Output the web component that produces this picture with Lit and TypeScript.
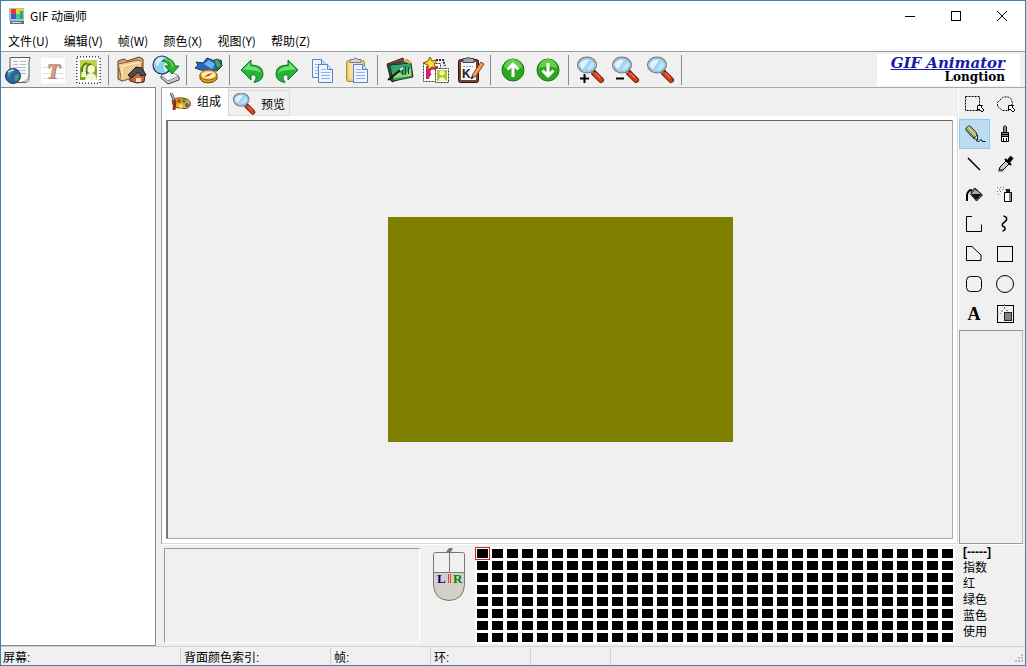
import { LitElement, html, svg, css } from "lit";
import { customElement, state } from "lit/decorators.js";
import { classMap } from "lit/directives/class-map.js";

const lens = svg`
  <path d="M20 21 L27 28" stroke="#6b1a0c" stroke-width="6" stroke-linecap="round"/>
  <path d="M21 22 L27 28" stroke="#d8401c" stroke-width="4" stroke-linecap="round"/>
  <path d="M21 21 L26 26" stroke="#f09070" stroke-width="1"/>
  <path d="M16 18 l3 3" stroke="#888" stroke-width="3"/>
  <ellipse cx="13" cy="13" rx="9" ry="7.500" fill="#9ed6f5" stroke="#67737c" stroke-width="2"/>
  <ellipse cx="13" cy="13" rx="8.500" ry="7" fill="none" stroke="#c7d3da" stroke-width="1"/>
  <path d="M6 12 q3 -5 9 -4 l-6 9 q-3 -1 -3 -5z" fill="#e2f5ff"/>
  <path d="M13 18 l5 -8 q3 2 1 5 q-2 3 -6 3z" fill="#c4e9fc"/>`;

const sheet = (x: number, y: number) => svg`
  <g transform="translate(${x} ${y})">
    <path d="M.5 .5 h9 l5 5 v13 h-14z" fill="#eef4ff" stroke="#5b82c4"/>
    <path d="M9.5 .5 v5 h5" fill="#c9dbf8" stroke="#5b82c4"/>
    <path d="M3 5.5 h5 M3 8.500 h9 M3 11.500 h9 M3 14.500 h9" stroke="#8fb0e2"/>
  </g>`;

const globe = (x: number, y: number, r: number, sea: string, land: string) => svg`
  <g transform="translate(${x} ${y}) scale(${r / 8})">
    <circle r="8" fill="${sea}" stroke="#16325c"/>
    <path d="M-6 -3 q2 -4 6 -4 q1 3 -2 4 q0 3 -3 4z" fill="${land}"/>
    <path d="M2 -1 q4 -2 5 1 q-1 4 -4 6 q-2 -2 -1 -7z" fill="${land}"/>
    <path d="M-5 -4 q3 -3 6 -2" stroke="#d9f1ff" fill="none" stroke-width="1.500"/>
  </g>`;

const undo = svg`
  <path d="M6 18 L16 8 V13 Q28 13 28 22 Q28 29 19 30.500 Q22 26 21 24 Q19 22 16 23 V28z"
    fill="#27b43c" stroke="#0d7a20" stroke-linejoin="round"/>
  <path d="M8 17.500 L15 10.500 V14.500 Q24 14 26 21 Q22 18 15 18z" fill="#73e06c"/>`;

const disc = svg`
  <circle cx="17" cy="18" r="11" fill="#2ba81d" stroke="#16780d"/>
  <path d="M8 16 a9 9 0 0 1 18 0 q-9 -3 -18 0z" fill="#64cf4c"/>`;

const art: Record<string, unknown> = {
  project: svg`
    <path d="M9 5.500 h20 q-1 2 -1 5 v16 q0 4 -5 4 h-10 q-4 0 -4 -4z" fill="#f7f8fa" stroke="#555b63"/>
    <path d="M12 9.500 h5 M12 12.500 h5 M19 9.500 h6 M19 12.500 h6 M12 15.500 h13 M16 18.500 h9 M19 21.500 h6" stroke="#b9bec6"/>
    <path d="M21 30 q6 -1 7 -7" stroke="#999" fill="none"/>
    ${globe(12, 24, 7.5, "#2c63a8", "#3f9f70")}`,
  text: svg`
    <rect x="5" y="6" width="24" height="25" fill="#fff"/>
    <path d="M6 15.500 h22 M6 21.500 h22 M6 26.500 h22" stroke="#e8e0da"/>
    <text x="18" y="27" text-anchor="middle" fill="#9c8078" font-size="22" font-weight="700" font-style="italic" font-family="Liberation Serif, serif">T</text>
    <text x="17" y="26" text-anchor="middle" fill="#d99a80" font-size="22" font-weight="700" font-style="italic" font-family="Liberation Serif, serif">T</text>`,
  stamp: svg`
    <rect x="6" y="5" width="23" height="26" fill="#fff" stroke="#444" stroke-width="2" stroke-dasharray="1 2"/>
    <rect x="6.500" y="5.500" width="22" height="25" fill="#fff"/>
    <rect x="9" y="8" width="17" height="20" fill="#7ea81c"/>
    <path d="M9 8 h17 v8 q-5 -5 -9 -5 t-8 5z" fill="#b9d44b"/>
    <circle cx="20" cy="17" r="4" fill="#f6f9df"/><circle cx="14" cy="16" r="3" fill="#e1edaa"/>
    <path d="M14 28 q1 -7 6 -7 q5 0 6 7z M10 25 q0 -6 4 -7 q2 3 1 7z" fill="#f3f7d5"/>
    <path d="M11 20 q0 -8 5 -9 M16 22 q-2 -9 4 -10" stroke="#4d7410" stroke-width="1.500" fill="none"/>`,
  open: svg`
    <path d="M4 9 l6 -2 l3 2 l12 -4 l4 2 v16 l-21 6 -4 -2z" fill="#d8aa6b" stroke="#5d4020"/>
    <path d="M4 12 l20 -4 4 2 v13 l-20 6z" fill="#f0ca91" stroke="#8a6334"/>
    <path d="M8 28 V14 l20 -4" fill="none" stroke="#fff0d4"/>
    <path d="M16 23 l7 -7 8 7 -1 7 -7 1 -7 -2z" fill="#c9692c" stroke="#502010"/>
    <path d="M14 23 l8 -8 6 1 4 7 -5 1 -3 -4 -6 6z" fill="#4c4c52" stroke="#222"/>
    <rect x="22" y="26" width="5" height="4" fill="#f8e0d0"/>`,
  web: svg`
    <path d="M12 24 l9 -5 9 6 v3 l-11 4 -7 -6z" fill="#c6cad0" stroke="#444"/>
    <path d="M12 23 l9 -4 9 5 -11 5z" fill="#f4f5f7" stroke="#888"/>
    ${globe(13, 13, 9, "#8fcdec", "#d8f0f0")}
    <path d="M13 9 q10 -6 13 5 h4 l-7 8 -7 -8 h4 q-2 -5 -7 -5z" fill="#2db52e" stroke="#12701a"/>
    <path d="M16 8 q6 -2 8 7" stroke="#91e77f" fill="none"/>`,
  optimize: svg`
    <path d="M4 10 l7 1 4 -5 8 3 6 -1 1 6 -5 5 -16 -1 -6 -2 3 -3z" fill="#2d66b6" stroke="#173364"/>
    <path d="M12 12 l5 -4 6 4 -3 5z" fill="#69b5ea"/>
    <path d="M22 8 l4 -1 4 7 -5 3z" fill="#50a069" stroke="#1d5637"/>
    <path d="M8 23 v4 q2 4 8 4 t9 -4 v-4z" fill="#e0a21c" stroke="#6d4708"/>
    <ellipse cx="16.500" cy="23" rx="8.500" ry="5" fill="#f7cf55" stroke="#8a5d0c"/>
    <ellipse cx="16.500" cy="23" rx="6" ry="3" fill="#fff4dd"/>
    <path d="M12 25 l4 -3 5 -1 -4 3z" fill="#c83c20"/>`,
  undo,
  redo: svg`<g transform="matrix(-1 0 0 1 34 0)">${undo}</g>`,
  copy: svg`${sheet(7, 7)}${sheet(13, 12)}`,
  paste: svg`
    <rect x="6.500" y="8.500" width="18" height="21" rx="2" fill="#f1c968" stroke="#b18432"/>
    <rect x="9" y="11" width="13" height="16" fill="#f9e1a0"/>
    <path d="M10 10.500 v-3 h3 q2 -3 5 0 h3 v3z" fill="#cfd5de" stroke="#75808f"/>
    ${sheet(13, 12)}`,
  effects: svg`
    <path d="M4 12 l16 -6 4 16 -16 7z" fill="#b94030" stroke="#431b18"/>
    <path d="M5 13 l20 -5 3 15 -19 7z" fill="#28775c" stroke="#12392e"/>
    <path d="M7 13 l21 -2 2 14 -20 4z" fill="#37a56d" stroke="#12392e"/>
    <path d="M10 26 q5 -8 8 -4 t10 -6 v8z" fill="#a3d765"/>
    <path d="M19.500 15 v8 M22.500 14 v9 M25.500 15 v7" stroke="#154c30"/>
    <path d="M5 28 L20 16" stroke="#111" stroke-width="2"/><path d="M17 18 l3 -2" stroke="#fff" stroke-width="2"/>
    <path d="M20 9 l3 -3 2 3 4 0 -2 3z" fill="#e7b560"/>`,
  transition: svg`
    <rect x="5.500" y="11.500" width="17" height="18" fill="#fff" stroke="#333" stroke-dasharray="2 1"/>
    <rect x="8" y="14" width="12" height="13" fill="#d61e78"/>
    <path d="M11 27 q1 -5 4 -5 t4 5z" fill="#fff"/><circle cx="15" cy="20" r="2.500" fill="#fff"/>
    <rect x="17.500" y="16.500" width="13" height="14" fill="#fff" stroke="#333" stroke-dasharray="2 1"/>
    <rect x="19" y="18" width="10" height="11" fill="#abc82c"/>
    <circle cx="24" cy="21" r="2.500" fill="#f5f7c4"/><path d="M20 29 q4 -8 8 0z" fill="#f5f7c4"/>
    <path d="M12 5 l2 4 5 -1 -3 4 2 4 -4 -1 -4 3 0 -5 -5 -2 5 -2z" fill="#ffd83b" stroke="#795400"/>
    <path d="M18 8 h7 l2 6" stroke="#333" fill="none" stroke-width="2" stroke-dasharray="2 1"/>`,
  properties: svg`
    <rect x="5.500" y="7.500" width="20" height="23" rx="2" fill="#72432d" stroke="#2c1813"/>
    <rect x="8" y="10" width="15" height="18" fill="#fafafa"/>
    <path d="M10 10.500 v-4 h3 q2 -2 5 0 h3 v4z" fill="#a5a9ae" stroke="#444"/>
    <path d="M10 14.500 h10" stroke="#7a99bb" stroke-dasharray="2 1"/>
    <text x="9" y="26" font-size="12" font-weight="700" font-family="Liberation Sans, sans-serif" fill="#222">K</text>
    <path d="M18 27 l2 -5 8 -12 3 2 -8 12z" fill="#f0a252" stroke="#8a3e15"/><path d="M18 27 l1 -3 2 1z" fill="#222"/>`,
  up: svg`${disc}<path d="M17 25 V13 M11.500 17.500 L17 12 L22.500 17.500" stroke="#fff" stroke-width="3" fill="none"/>`,
  down: svg`${disc}<path d="M17 11 V23 M11.500 18.500 L17 24 L22.500 18.500" stroke="#fff" stroke-width="3" fill="none"/>`,
  zoomIn: svg`${lens}<path d="M6 26.500 h9 M10.500 22 v9" stroke="#000" stroke-width="2"/>`,
  zoomOut: svg`${lens}<path d="M7 26.500 h8" stroke="#000" stroke-width="2"/>`,
  zoom: lens,
};

const arrow = svg`<path d="M18.500 16.500 h5 l-1.500 1.500 3 3 -2 2 -3 -3 -1.500 1.500z" fill="#fff" stroke="#000"/>`;

const toolArt: Record<string, unknown> = {
  select: svg`<path d="M6.500 7.500 h14 v14 h-14z" fill="none" stroke="#000" stroke-dasharray="2 1"/>${arrow}`,
  lasso: svg`<path d="M7.500 13.500 l5 -5 q6 -2 9 2 l1 4 -4 7 h-6 l-5 -4z" fill="none" stroke="#000" stroke-dasharray="2 1"/>${arrow}`,
  pencil: svg`
    <path d="M7.500 8.500 l3 -2 7 7 1 7 -6 -3 -6 -7z" fill="#a9b36b" stroke="#333"/>
    <path d="M9 8 l8 9" stroke="#e4e8ba"/><path d="M7 10 l8 8" stroke="#6d7540"/><path d="M18.500 16 v4.500 l-4 -1z" fill="#fff" stroke="#222"/>
    <path d="M17 21.500 l3 1 2 -2 1.500 2 h3" stroke="#000" fill="none"/>`,
  brush: svg`
    <path d="M13.500 13 v-5 q1.500 -3 3 0 v5" fill="#888" stroke="#222"/>
    <path d="M11.500 13.500 h7 v9 h-7z M11.500 17.500 h7" fill="#fff" stroke="#000"/>
    <path d="M11 15.500 h8" stroke="#000" stroke-width="2"/><path d="M13.500 19 v3 M16.500 19 v3" stroke="#000"/>`,
  line: svg`<path d="M9 9 L21 21" stroke="#000" stroke-width="1.500"/>`,
  picker: svg`
    <path d="M8 22 h5" stroke="#999" stroke-width="2"/><path d="M9 21 l1 -3 7 -7 3 3 -7 7z" fill="#c8d0c8" stroke="#000"/>
    <path d="M15 10 l6 6" stroke="#000" stroke-width="2"/><path d="M18 13 l4 -5" stroke="#000" stroke-width="4"/>`,
  fill: svg`
    <path d="M8 22 v-6 q1 -5 5 -5" stroke="#000" stroke-width="2" fill="none"/>
    <path d="M11.500 15 l5 -5 7 6 -6 6z" fill="#aaa" stroke="#000"/><path d="M12 15 h11 l-5.500 6z" fill="#111"/>
    <path d="M12 14 q3 -8 7 -2" stroke="#000" fill="none"/>`,
  spray: svg`
    <path d="M7 8.500 h8 M7 12.500 h6 M9 10.500 h7 M8 15.500 h3" stroke="#777" stroke-dasharray="1 2"/>
    <path d="M14.500 13.500 h7 v9 h-7z" fill="#fff" stroke="#000"/><path d="M16 13 v-3 h4 v3z" fill="#222"/><path d="M20 14 v8" stroke="#888" stroke-width="2"/>`,
  polyline: svg`<path d="M13 7.500 h-5.500 v15 h15 v-7" fill="none" stroke="#000"/>`,
  curve: svg`<path d="M13.500 7 q4 1 3 4 l-4 4 q-1 2 2 3 q2 3 -2 4" fill="none" stroke="#000" stroke-width="1.500"/>`,
  polygon: svg`<path d="M7.500 7.500 h5.500 l9 8.500 v5.500 h-14.500z" fill="none" stroke="#000"/>`,
  rect: svg`<rect x="7.500" y="7.500" width="15" height="15" fill="none" stroke="#000"/>`,
  rounded: svg`<rect x="7.500" y="7.500" width="15" height="15" rx="4" fill="none" stroke="#000"/>`,
  ellipse: svg`<circle cx="15" cy="15" r="8.500" fill="none" stroke="#000"/>`,
  type: svg`<text x="15" y="21" text-anchor="middle" fill="#000" font-size="18" font-weight="700" font-family="Liberation Serif, serif">A</text>`,
  transparent: svg`
    <rect x="7.500" y="6.500" width="16" height="17" fill="none" stroke="#000"/>
    <path d="M14.500 5 v5 M7 14.500 h4 M16 11.500 h2 M11 12 h2" stroke="#777" stroke-dasharray="2 1"/>
    <rect x="14.500" y="13.500" width="7" height="8" fill="#808080" stroke="#222"/>`,
};

const toolbarGroups: [string, string][][] = [
  [["project", "新建"], ["text", "文字"], ["stamp", "图像"]],
  [["open", "打开"], ["web", "保存"]],
  [["optimize", "优化"]],
  [["undo", "撤销"], ["redo", "重做"], ["copy", "复制"], ["paste", "粘贴"]],
  [["effects", "效果"], ["transition", "过渡"], ["properties", "属性"]],
  [["up", "上移"], ["down", "下移"]],
  [["zoomIn", "放大"], ["zoomOut", "缩小"], ["zoom", "缩放"]],
];

const menus = ["文件(U)", "编辑(V)", "帧(W)", "颜色(X)", "视图(Y)", "帮助(Z)"];
const swatches = Array.from({ length: 256 }, (_, i) => i);

@customElement("app-root")
export class AppRoot extends LitElement {
  @state() private tool = "pencil";
  @state() private tab = 0;
  @state() private swatch = 0;

  static styles = css`
    :host {
      display: flex;
      flex-direction: column;
      height: 100vh;
      box-sizing: border-box;
      border: 1px solid #3c7fa8;
      background: #f0f0f0;
      color: #000;
      font: 12px/16px "Liberation Sans", "Noto Sans CJK SC", sans-serif;
      overflow: hidden;
    }
    * { box-sizing: border-box; }
    button {
      margin: 0; padding: 0; border: 0; background: none;
      color: inherit; font: inherit; text-align: inherit;
    }
    svg { display: block; fill: none; }
    .title {
      display: flex; align-items: center; height: 29px; flex: none;
      background: #fff; padding-left: 8px; gap: 5px;
      font-family: "Noto Sans CJK SC", sans-serif;
    }
    .title h1 { flex: 1; margin: 0; font-size: 12px; font-weight: 400; }
    .caption { display: flex; }
    .caption button { width: 46px; height: 28px; display: grid; place-items: center; }
    .menu {
      display: flex; gap: 15px; padding: 0 7px; height: 21px; flex: none;
      align-items: center; background: #fff;
      font-family: "Noto Sans CJK SC", sans-serif;
    }
    .toolbar {
      display: flex; height: 36px; flex: none;
      border-top: 1px solid #999;
    }
    .group { display: flex; }
    .group::after {
      content: ""; width: 1px; height: 30px; margin: 3px 5px 0 2px; background: #888;
    }
    .group button { width: 35px; height: 35px; }
    .brand {
      margin: 2px 5px 0 auto; width: 143px; height: 32px; padding-right: 15px;
      background: #fff; text-align: right; font-family: "DejaVu Serif", serif; font-weight: 700;
    }
    .brand a {
      display: block; color: #1a1aa8; font-size: 15px; line-height: 18px; font-style: italic;
      white-space: nowrap; text-decoration: underline;
    }
    .brand span { display: block; font-size: 12px; line-height: 11px; }
    .body { display: flex; flex: 1; min-height: 0; }
    .frames {
      width: 155px; flex: none; background: #fff;
      border: solid #888; border-width: 1px 1px 1px 0; margin-right: 5px;
    }
    .work { flex: 1; min-width: 0; display: flex; flex-direction: column; border-top: 1px solid #aaa; }
    .upper { display: flex; flex: 1; min-height: 0; }
    .book {
      flex: 1; min-width: 0; display: flex; flex-direction: column;
      border-left: 1px solid #a0a0a0;
    }
    .tabs { display: flex; height: 28px; flex: none; align-items: stretch; }
    .tab {
      display: flex; align-items: center; width: 61px; padding: 3px 0 0 3px; gap: 4px;
      border: solid #dcdcdc; border-width: 0 1px 0 0;
    }
    .tab.active { width: 67px; padding: 0 0 0 5px; background: #fff; gap: 4px; }
    .tab:not(.active) { border-width: 1px 1px 1px 0; margin-top: 2px; }
    .page {
      flex: 1; min-height: 0; display: flex; padding: 4px;
      background: #fff; border-right: 1px solid #d9d9d9; border-bottom: 1px solid #d9d9d9;
    }
    .canvas {
      flex: 1; display: grid; place-items: center; background: #f0f0f0;
      border: solid; border-width: 1px 1px 1px 2px; border-color: #666 #aaa #aaa #777;
    }
    .image { width: 345px; height: 225px; background: #808000; }
    .tools {
      width: 67px; flex: none; padding-right: 2px; display: flex; flex-direction: column;
      border-left: 1px solid #fff;
    }
    .toolgrid { display: grid; grid-template-columns: 31px 30px; grid-auto-rows: 30px; padding-top: 1px; }
    .toolgrid button { height: 30px; }
    .toolgrid .on { background: #bcdcf4; box-shadow: inset 0 0 0 1px #90c8f6; }
    .preview { flex: 1; border: 1px solid #999; border-right-color: #bbb; margin-top: 1px; }
    .lower { display: flex; height: 102px; flex: none; border-top: 1px solid #fff; }
    .info {
      flex: 1; min-width: 0; margin: 3px 12px 3px 3px;
      border: solid; border-width: 1px; border-color: #999 #fff #fff #999;
    }
    .mouse { width: 34px; height: 54px; flex: none; margin: 3px 9px 0 0; }
    .palette {
      display: grid; grid-template-columns: repeat(32, 15px); grid-auto-rows: 12px;
      flex: none; padding-top: 2px;
    }
    .palette button {
      border: 2px solid #fff; background: #000;
      height: 13px; width: 15px; outline: 0;
    }
    .palette button.on {
      z-index: 1; padding: 1px; border: 1px solid #d02020;
      background: linear-gradient(#000, #000) content-box, #fff;
    }
    .legend { width: 62px; flex: none; margin: 0 0 0 8px; }
    .legend p { margin: 0; }
    .legend .index { line-height: 15px; font-weight: 700; }
    .status {
      display: flex; height: 19px; flex: none; border-top: 1px solid #d0d0d0;
    }
    .cell { width: 100px; padding-left: 3px; border-right: 1px solid #d0d0d0; margin-top: 1px; line-height: 20px; }
    .cell.first { width: 180px; padding-left: 2px; }
    .cell.wide { width: 150px; }
    .cell.small { width: 80px; }
    .grip { margin: auto 1px 1px auto; }
  `;

  private renderToolbar() {
    return html`<div class="toolbar" role="toolbar" aria-label="工具栏">
      ${toolbarGroups.map((g) => html`<div class="group">
        ${g.map(([id, label]) => html`<button aria-label=${label}>
          <svg width="35" height="35" viewBox="0 0 35 35">${art[id]}</svg>
        </button>`)}
      </div>`)}
      <div class="brand"><a href="#">GIF Animator</a><span>Longtion</span></div>
    </div>`;
  }

  private renderTabs() {
    return html`<div class="tabs" role="tablist">
      <button role="tab" aria-selected=${this.tab === 0} class=${classMap({ tab: true, active: this.tab === 0 })} @click=${() => (this.tab = 0)}>
        <svg width="26" height="24" viewBox="0 0 26 24">
          <path d="M5 10 q7 -4 15 -1 q5 3 3 7 q-3 4 -9 2 q-9 1 -9 -8z" fill="#e7aa28" stroke="#7d4b16"/>
          <circle cx="12" cy="11" r="2" fill="#d83925"/><circle cx="17" cy="11" r="2" fill="#2f9b44"/>
          <circle cx="20" cy="15" r="2" fill="#3264c5"/><circle cx="14" cy="16" r="2" fill="#f7e44b"/>
          <path d="M4 3 l4 9" stroke="#555" stroke-width="3"/><path d="M4 2 l3 8" stroke="#ddd"/><path d="M8 11 l-1 9" stroke="#8c2f20" stroke-width="3"/>
        </svg>组成</button>
      <button role="tab" aria-selected=${this.tab === 1} class=${classMap({ tab: true, active: this.tab === 1 })} @click=${() => (this.tab = 1)}>
        <svg width="25" height="24" viewBox="2 5 30 29">${lens}</svg>预览</button>
    </div>`;
  }

  render() {
    return html`
      <header class="title">
        <svg width="16" height="16" viewBox="0 0 16 16">
          <path d="M0 0 h15 v13 h-15z" fill="#b9bdc3"/><path d="M2 1 h12 v10 h-12z" fill="#19195e"/>
          <path d="M2 1 h5 v5 h-5z" fill="#ef3a28"/><path d="M7 1 h7 v5 h-7z" fill="#e3d72d"/>
          <path d="M2 6 h5 v5 h-5z" fill="#345fe1"/><path d="M7 6 h4 v5 h-4z" fill="#25c7cc"/><path d="M11 3 h3 v8 h-3z" fill="#2eae45"/>
          <path d="M1 13 h14 v3 h-14z" fill="#66716f"/><path d="M3 14.500 h9" stroke="#d6ddda"/>
        </svg>
        <h1>GIF 动画师</h1>
        <div class="caption">
          <button aria-label="最小化"><svg width="12" height="12"><path d="M1 6.500 h10" stroke="#000"/></svg></button>
          <button aria-label="最大化"><svg width="12" height="12"><rect x="1.500" y="1.500" width="9" height="9" stroke="#000"/></svg></button>
          <button aria-label="关闭"><svg width="12" height="12"><path d="M1 1 l10 10 M11 1 l-10 10" stroke="#000"/></svg></button>
        </div>
      </header>
      <nav class="menu">${menus.map((m) => html`<button>${m}</button>`)}</nav>
      ${this.renderToolbar()}
      <main class="body">
        <aside class="frames" aria-label="帧列表"></aside>
        <div class="work">
          <div class="upper">
            <section class="book">
              ${this.renderTabs()}
              <div class="page"><div class="canvas"><div class="image"></div></div></div>
            </section>
            <aside class="tools">
              <div class="toolgrid">
                ${Object.keys(toolArt).map((id) => html`<button aria-label=${id} class=${classMap({ on: this.tool === id })} @click=${() => (this.tool = id)}>
                  <svg width="31" height="30" viewBox="0 0 31 30">${toolArt[id]}</svg>
                </button>`)}
              </div>
              <div class="preview"></div>
            </aside>
          </div>
          <div class="lower">
            <div class="info"></div>
            <svg class="mouse" viewBox="0 0 34 54">
              <path d="M14 4 l3 -4 h4 l-2 4z" fill="#777"/>
              <path d="M1.500 24 h31 v13 q-1 15 -15.500 15.500 q-14.500 -.5 -15.500 -15.500z" fill="#d4d0c8"/>
              <path d="M1.500 37 V6.500 q0 -2 2 -2 h27 q2 0 2 2 V37 q-1 15 -15.500 15.500 q-14.500 -.5 -15.500 -15.500z M1.500 24.500 h31 M17.500 4.500 v20" stroke="#777"/>
              <path d="M16.500 26 v9 M18.500 26 v9" stroke="#d84030"/>
              <text x="5" y="35" font-size="13" font-weight="700" font-family="Liberation Serif, serif" fill="#00008b">L</text>
              <text x="21" y="35" font-size="13" font-weight="700" font-family="Liberation Serif, serif" fill="#108010">R</text>
            </svg>
            <div class="palette">
              ${swatches.map((i) => html`<button aria-label="颜色 ${i}" class=${classMap({ on: this.swatch === i })} @click=${() => (this.swatch = i)}></button>`)}
            </div>
            <div class="legend">
              <p class="index">[-----]</p><p>指数</p><p>红</p><p>绿色</p><p>蓝色</p><p>使用</p>
            </div>
          </div>
        </div>
      </main>
      <footer class="status">
        <div class="cell first">屏幕:</div><div class="cell wide">背面颜色索引:</div>
        <div class="cell">帧:</div><div class="cell">环:</div><div class="cell small"></div>
        <svg class="grip" width="10" height="10"><path d="M7 0h2v2h-2zM4 3h2v2h-2zM7 3h2v2h-2zM1 6h2v2h-2zM4 6h2v2h-2zM7 6h2v2h-2z" fill="#bbb"/></svg>
      </footer>`;
  }
}
